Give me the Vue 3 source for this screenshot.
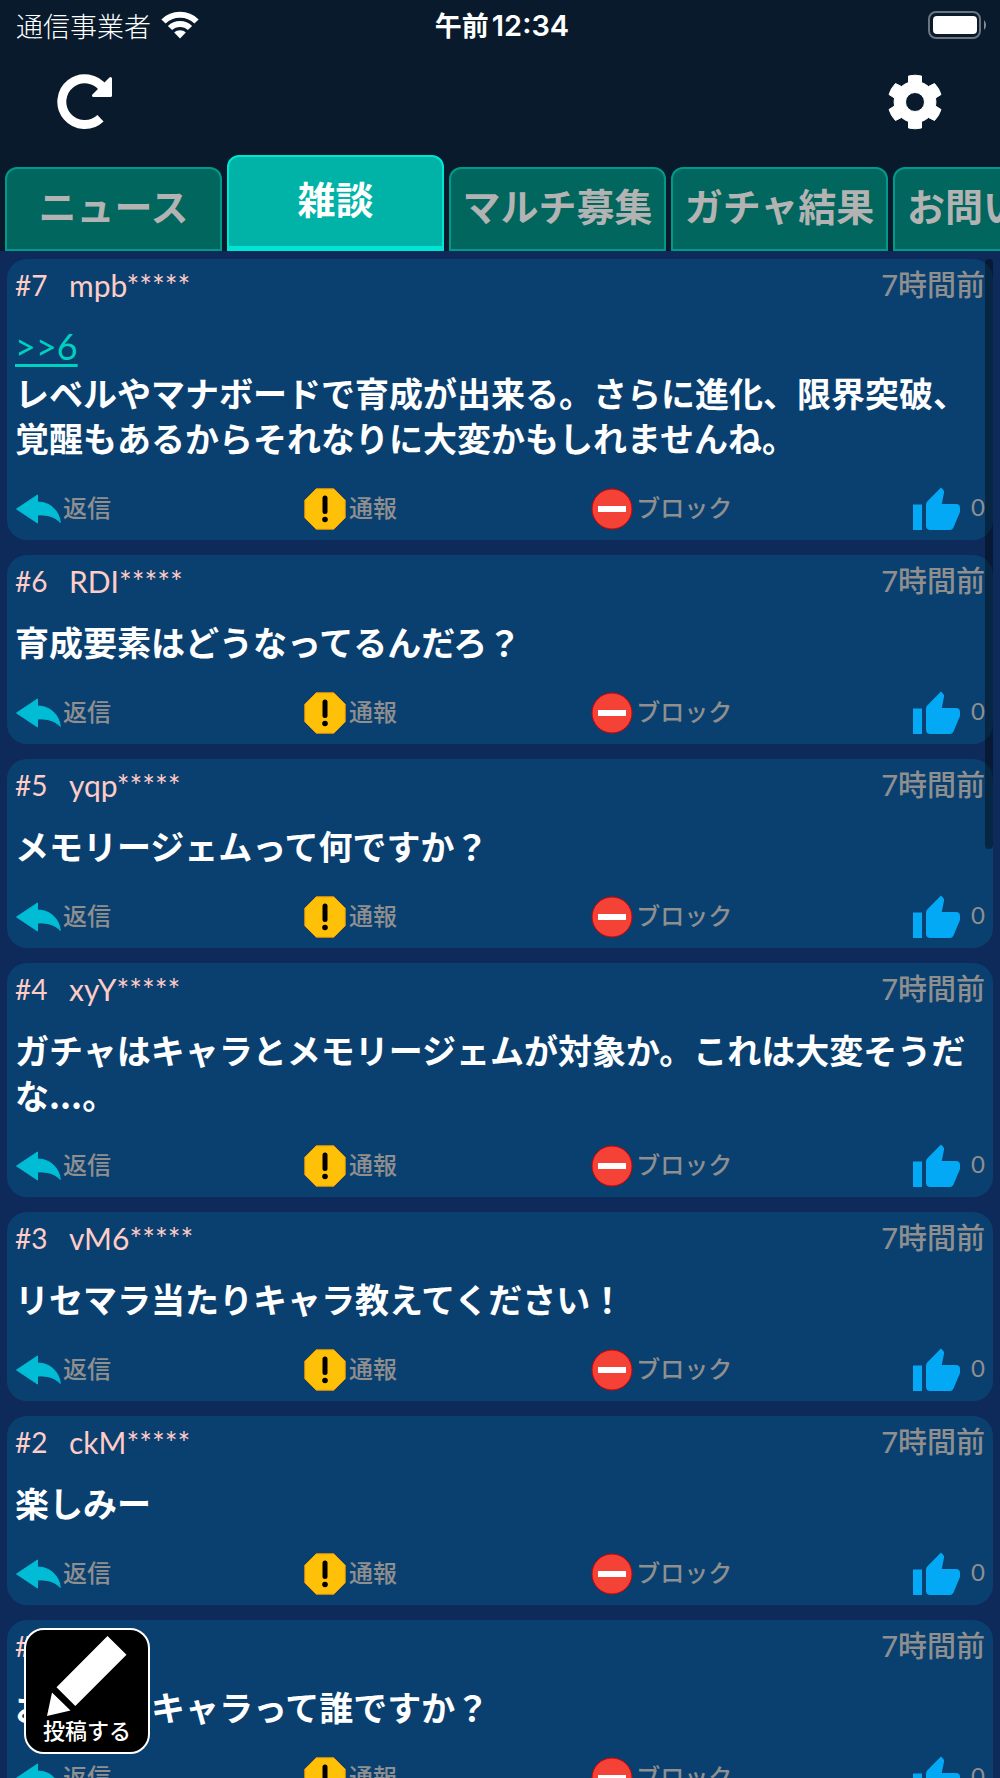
<script setup>
import { ref } from 'vue'

const tabs = ['ニュース', '雑談', 'マルチ募集', 'ガチャ結果', 'お問い合わせ']
const activeTab = ref('雑談')

const posts = [
  {
    id: 7,
    user: 'mpb*****',
    replyTo: 6,
    body: 'レベルやマナボードで育成が出来る。さらに進化、限界突破、覚醒もあるからそれなりに大変かもしれませんね。'
  },
  { id: 6, user: 'RDI*****', body: '育成要素はどうなってるんだろ？' },
  { id: 5, user: 'yqp*****', body: 'メモリージェムって何ですか？' },
  {
    id: 4,
    user: 'xyY*****',
    body: 'ガチャはキャラとメモリージェムが対象か。これは大変そうだな...。'
  },
  { id: 3, user: 'vM6*****', body: 'リセマラ当たりキャラ教えてください！' },
  { id: 2, user: 'ckM*****', body: '楽しみー' },
  { id: 1, user: '', body: 'おすすめキャラって誰ですか？' }
]
</script>

<template>
  <div class="screen">
    <div class="status">
      <div class="carrier">
        <span>通信事業者</span>
        <svg width="38" height="28" viewBox="0 0 38 28" aria-hidden="true">
          <path
            fill="none"
            stroke="#fff"
            stroke-width="6"
            d="M2.5 10.5 C11.5 1.5 26.5 1.5 35.500 10.500 M9 17 C14.500 11.500 23.500 11.500 29 17"
          />
          <path fill="#fff" d="M19 27.500 L13.200 21.600 C16.500 18.600 21.500 18.600 24.800 21.600 Z" />
        </svg>
      </div>
      <time class="clock"><span>午前</span><span class="digits">12:34</span></time>
      <div class="power">
        <svg width="60" height="28" viewBox="0 0 60 28" aria-hidden="true">
          <rect x="1" y="1" width="51" height="26" rx="7" fill="none" stroke="#6b747f" stroke-width="2" />
          <rect x="5" y="5" width="44" height="18" rx="4" fill="#fff" />
          <path d="M56 9 a7 7 0 0 1 0 10 Z" fill="#848c95" />
        </svg>
      </div>
    </div>

    <header class="nav">
      <button type="button" class="icon-button" aria-label="更新">
        <svg width="56" height="56" viewBox="0 0 56 56" aria-hidden="true">
          <path
            fill="none"
            stroke="#fff"
            stroke-width="9"
            d="M43.500 44.300 A22.900 22.900 0 1 1 46.500 14.600"
          />
          <path
            fill="#fff"
            stroke="#fff"
            stroke-width="3"
            stroke-linejoin="round"
            d="M53.500 4.500 V21.500 H36.500 Z"
          />
        </svg>
      </button>
      <button type="button" class="icon-button" aria-label="設定">
        <svg width="56" height="56" viewBox="-28 -28 56 56" aria-hidden="true">
          <path
            fill="#fff"
            fill-rule="evenodd"
            stroke="#fff"
            stroke-linejoin="round"
            d="M-6.500 -26 Q0 -27.600 6.500 -26 V-19.500 Q10.500 -18 13.500 -15.500 L19.500 -18.500 Q24 -14 26 -7.500 L20.500 -4 Q21.300 0 20.500 4 L26 7.500 Q24 14 19.500 18.500 L13.500 15.500 Q10.500 18 6.500 19.500 V26 Q0 27.600 -6.500 26 V19.500 Q-10.500 18 -13.500 15.500 L-19.500 18.500 Q-24 14 -26 7.500 L-20.500 4 Q-21.300 0 -20.500 -4 L-26 -7.500 Q-24 -14 -19.500 -18.500 L-13.500 -15.500 Q-10.500 -18 -6.500 -19.500 Z M0 -9.500 A9.500 9.500 0 1 0 0 9.500 A9.500 9.500 0 1 0 0 -9.500 Z"
          />
        </svg>
      </button>
    </header>

    <nav class="tabs">
      <button
        v-for="tab in tabs"
        :key="tab"
        type="button"
        class="tab"
        :class="{ active: tab === activeTab }"
        @click="activeTab = tab"
      >
        {{ tab }}
      </button>
    </nav>

    <main class="feed">
      <article v-for="post in posts" :id="'post-' + post.id" :key="post.id" class="card">
        <div class="meta">
          <span class="number">#{{ post.id }}</span>
          <span class="user">{{ post.user }}</span>
          <span class="ago">7時間前</span>
        </div>
        <a v-if="post.replyTo" class="anchor" :href="'#post-' + post.replyTo">&gt;&gt;{{ post.replyTo }}</a>
        <p class="body">{{ post.body }}</p>
        <div class="actions">
          <button type="button" class="action">
            <svg width="46" height="42" viewBox="0 0 46 42" aria-hidden="true">
              <path
                fill="#00bcd4"
                stroke="#00bcd4"
                stroke-linejoin="round"
                d="M1.500 21 L22.500 7 V14 C34.500 14 44 22 45.300 34.500 C39.500 28 31.500 26.500 22.500 27 V35 Z"
              />
            </svg>
            <span class="label">返信</span>
          </button>
          <button type="button" class="action report">
            <svg width="42" height="42" viewBox="0 0 42 42" aria-hidden="true">
              <path
                fill="#ffc107"
                stroke="#f59b00"
                d="M12.200 .8 H29.800 L41.200 12.200 V29.800 L29.800 41.200 H12.200 L.8 29.800 V12.200 Z"
              />
              <path stroke="#000" stroke-width="5" stroke-linecap="round" d="M21 10 V23.500" />
              <circle cx="21" cy="31.500" r="2.800" />
            </svg>
            <span class="label">通報</span>
          </button>
          <button type="button" class="action block">
            <svg width="42" height="42" viewBox="0 0 42 42" aria-hidden="true">
              <circle cx="21" cy="21" r="20" fill="#f44336" stroke="#d50000" />
              <rect x="7" y="18" width="28" height="6" fill="#fff" />
            </svg>
            <span class="label">ブロック</span>
          </button>
          <button type="button" class="action like" aria-label="いいね 0">
            <svg width="48" height="44" viewBox="0 0 48 44" aria-hidden="true">
              <path
                fill="#03a9f4"
                d="M0 17.500 H9 V43 H0 Z M28 .6 L30.300 2.900 Q31.300 4 31.100 5.300 L28.800 17 H43 Q47 17 47 21 V25 L40.500 40.500 Q39.400 43 36.800 43 H17.500 Q13 43 13 38.500 V17.800 Q13 16 14.200 14.600 Z"
              />
            </svg>
            <span class="label count">0</span>
          </button>
        </div>
      </article>
      <div class="scrollbar" aria-hidden="true"></div>
    </main>

    <button type="button" class="compose">
      <svg width="90" height="86" viewBox="0 0 90 86" aria-hidden="true">
        <path fill="#fff" d="M65.500 3 L84.500 21.800 L33.300 73 L14.500 54.200 Z M10 59.500 L28.500 77.500 L5 83 Z" />
      </svg>
      投稿する
    </button>
  </div>
</template>

<style>
body {
  margin: 0;
  background: #0e2a5a;
}
</style>

<style scoped>
.screen {
  position: relative;
  display: flex;
  flex-direction: column;
  height: 100vh;
  overflow: hidden;
  background: #081a2b;
  color: #fff;
  font-family: "Noto Sans CJK JP", sans-serif;
}

button {
  margin: 0;
  padding: 0;
  border: 0;
  background: none;
  color: inherit;
  font: inherit;
  cursor: pointer;
}

svg {
  display: block;
  flex: none;
}

.status {
  display: grid;
  grid-template-columns: 1fr auto 1fr;
  align-items: center;
  flex: none;
  height: 49px;
  padding: 0 12px 0 16px;
  font-size: 27px;
  line-height: 49px;
}

.carrier {
  display: flex;
  align-items: center;
  gap: 10px;
  font-weight: 300;
}

.clock {
  display: flex;
  align-items: baseline;
  gap: 3px;
  font-weight: 700;
}

.digits {
  font-family: Inter, sans-serif;
  font-size: 29px;
  font-weight: 600;
}

.power {
  display: flex;
  justify-content: flex-end;
}

.nav {
  display: flex;
  justify-content: space-between;
  align-items: center;
  flex: none;
  height: 106px;
  padding: 0 57px;
}

.tabs {
  display: flex;
  align-items: flex-end;
  gap: 5px;
  flex: none;
  height: 96px;
  padding-left: 5px;
  overflow: hidden;
}

.tab {
  flex: none;
  box-sizing: border-box;
  width: 217px;
  height: 84px;
  padding-bottom: 8px;
  border: 2px solid #00998a;
  border-radius: 12px 12px 0 0;
  background: #00665e;
  color: #b3b3b3;
  font-size: 38px;
  font-weight: 700;
  line-height: 40px;
  white-space: nowrap;
  overflow: hidden;
}

.tab:last-child {
  width: auto;
  padding-left: 12px;
  padding-right: 12px;
}

.tab.active {
  height: 96px;
  border-color: #00e6d4;
  border-bottom-width: 5px;
  background: #00b3a6;
  color: #fff;
}

.feed {
  position: relative;
  display: flex;
  flex-direction: column;
  gap: 15px;
  flex: 1;
  min-height: 0;
  padding: 8px 7px;
  overflow: hidden;
  background: #0e2a5a;
}

.card {
  flex: none;
  padding: 0 8px 11px;
  border-radius: 20px;
  background: #0a4070;
}

.meta {
  display: flex;
  height: 52px;
  margin-bottom: 12px;
  font-family: Lato, "Noto Sans CJK JP", sans-serif;
  font-size: 29px;
  line-height: 52px;
}

.number {
  width: 54px;
  color: #ffccc7;
  font-size: 28px;
}

.user {
  color: #ffccc7;
  font-size: 30px;
}

.ago {
  margin-left: auto;
  color: #8f8f8f;
  font-weight: 500;
}

.anchor {
  display: block;
  width: fit-content;
  color: #00d0c0;
  font-family: Lato, sans-serif;
  font-size: 36px;
  line-height: 47px;
  text-underline-offset: 4px;
}

.body {
  margin: 0 0 27px;
  font-size: 34px;
  font-weight: 700;
  line-height: 45px;
}

.actions {
  display: grid;
  grid-template-columns: 29.8% 29.6% 1fr auto;
  height: 42px;
}

.action {
  display: flex;
  align-items: center;
  gap: 2px;
  color: #8f8f8f;
  font-size: 24px;
  font-weight: 500;
}

.label {
  height: 42px;
  line-height: 38px;
}

.report,
.block {
  gap: 3px;
}

.like {
  gap: 10px;
}

.count {
  font-family: Lato, sans-serif;
  font-weight: 400;
}

.scrollbar {
  position: absolute;
  top: 8px;
  right: 7px;
  width: 8px;
  height: 590px;
  border-radius: 4px;
  background: rgba(0, 0, 0, 0.4);
}

.compose {
  position: absolute;
  left: 24px;
  bottom: 24px;
  display: flex;
  flex-direction: column;
  align-items: center;
  box-sizing: border-box;
  width: 126px;
  height: 126px;
  padding-top: 3px;
  border: 2px solid #fff;
  border-radius: 20px;
  background: #000;
  font-size: 22px;
  font-weight: 500;
  line-height: 20px;
}
</style>
